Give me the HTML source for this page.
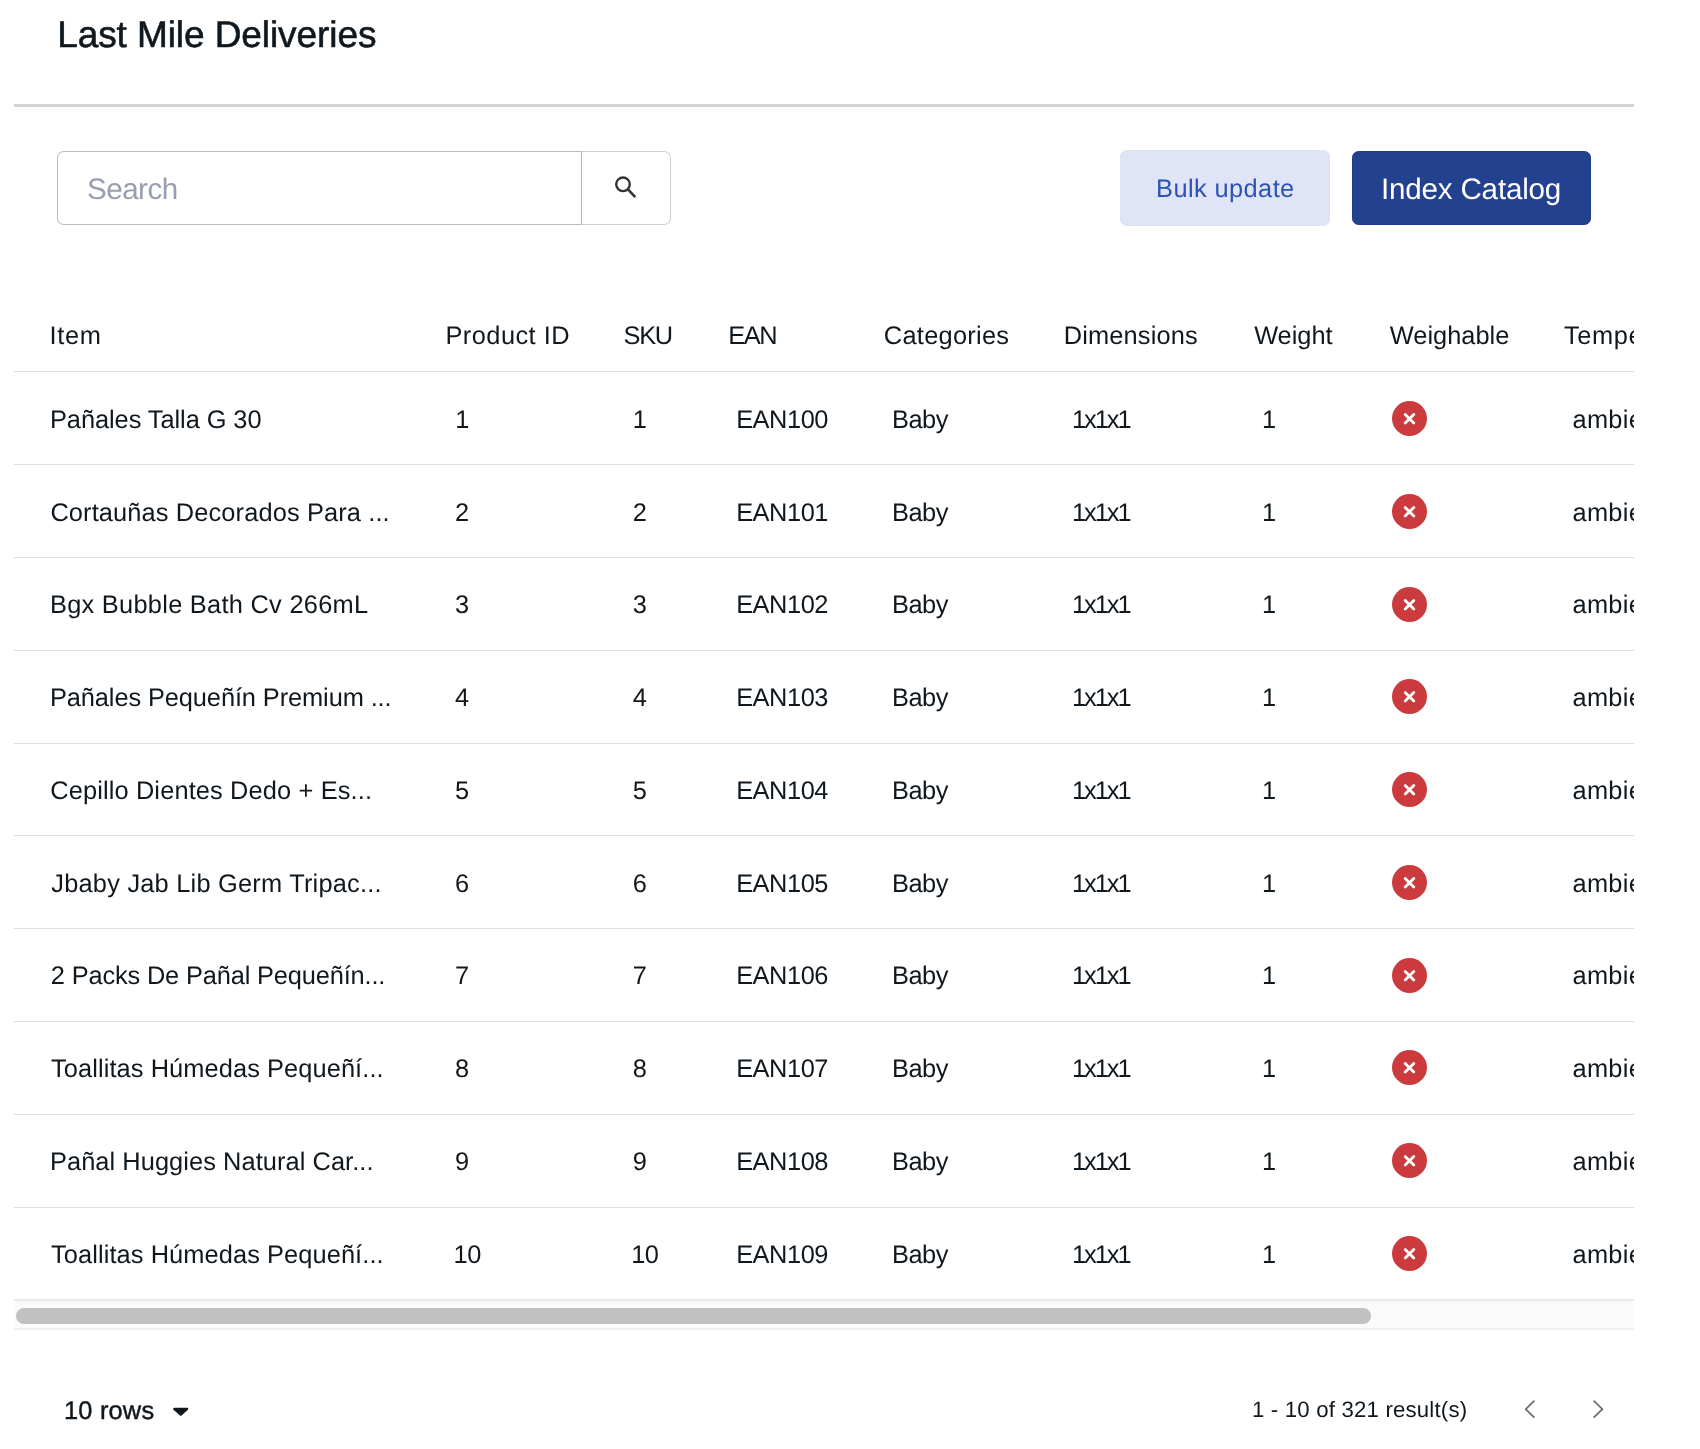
<!DOCTYPE html><html lang="es"><head><meta charset="utf-8"><title>Last Mile Deliveries</title><style>
*{box-sizing:border-box;margin:0;padding:0}
html,body{width:1700px;height:1449px;background:#fff;overflow:hidden}
body{position:relative;font-family:"Liberation Sans",Arial,sans-serif;color:#10181e;text-rendering:geometricPrecision}
.wrap{position:absolute;left:14px;top:0;width:1620px;height:1449px;overflow:hidden;will-change:transform}
.t{position:absolute;white-space:nowrap;line-height:1}
h1.t{font-size:37px;font-weight:400;-webkit-text-stroke:0.6px #10181e}
.hr{position:absolute;left:0;top:104px;width:1620px;height:3px;background:#d3d3d3}
.search{position:absolute;left:43px;top:151px;width:525px;height:74px;border:1px solid #bdbdbd;border-right:none;border-radius:7px 0 0 7px;background:#fff}
.ph{font-size:29.6px;color:#969eaf}
.sbtn{position:absolute;left:567px;top:151px;width:89.5px;height:74px;border:1px solid #cfcfcf;border-left:1px solid #b4b4b4;border-radius:0 7px 7px 0;background:#fff}
.btn{position:absolute;border-radius:6.5px}
.b1{left:1106px;top:150px;width:210px;height:76px;background:#dfe4f6;border:1px solid #dbe2f6}
.b2{left:1338px;top:151px;width:239px;height:74px;background:#244190;border:1px solid #1d3b8a}
.th,.td{font-size:25.4px}
.line{position:absolute;left:0;width:1620px;height:1px;background:#dedede}
.x{position:absolute;width:35px;height:35px}
.track{position:absolute;left:0;top:1299px;width:1620px;height:31px;background:#fafafa;border-top:2px solid #e9e9e9;border-bottom:2px solid #f0f0f0}
.thumb{position:absolute;left:2px;top:1308px;width:1355px;height:16px;border-radius:8px;background:#c1c1c1}
</style></head><body><div class="wrap">
<h1 class="t " id="title" style="left:43.15px;top:16.0px;letter-spacing:-0.079px;">Last Mile Deliveries</h1>
<div class="hr"></div>
<div class="search"></div>
<span class="t ph" id="ph" style="left:72.95px;top:175.0px;letter-spacing:-0.500px;">Search</span>
<div class="sbtn"><svg width="90" height="74" viewBox="0 0 90 74" style="position:absolute;left:-1px;top:-1px"><circle cx="42" cy="33.3" r="6.8" fill="none" stroke="#333" stroke-width="2.4"/><path d="M46.7 38.2 L54.3 46.1" stroke="#333" stroke-width="2.6" stroke-linecap="butt"/></svg></div>
<div class="btn b1"></div><div class="btn b2"></div>
<span class="t " id="bulk" style="left:1142.11px;top:177.0px;letter-spacing:0.400px;font-size:25.4px;color:#2d53b4;">Bulk update</span>
<span class="t " id="idx" style="left:1366.93px;top:174.6px;letter-spacing:-0.186px;font-size:29.6px;color:#fff;">Index Catalog</span>
<span class="t th" id="h0" style="left:35.40px;top:323.8px;letter-spacing:0.695px;">Item</span>
<span class="t th" id="h1" style="left:431.43px;top:323.8px;letter-spacing:0.456px;">Product ID</span>
<span class="t th" id="h2" style="left:609.60px;top:323.8px;letter-spacing:-1.345px;">SKU</span>
<span class="t th" id="h3" style="left:714.31px;top:323.8px;letter-spacing:-1.480px;">EAN</span>
<span class="t th" id="h4" style="left:869.83px;top:323.8px;letter-spacing:0.263px;">Categories</span>
<span class="t th" id="h5" style="left:1049.78px;top:323.8px;letter-spacing:0.140px;">Dimensions</span>
<span class="t th" id="h6" style="left:1240.13px;top:323.8px;letter-spacing:-0.008px;">Weight</span>
<span class="t th" id="h7" style="left:1375.83px;top:323.8px;letter-spacing:-0.006px;">Weighable</span>
<span class="t th" id="h8" style="left:1550.10px;top:323.8px;letter-spacing:0.580px;">Temperature</span>
<div class="line" style="top:371.0px"></div>
<span class="t td" id="r0c0" style="left:35.98px;top:407.8px;letter-spacing:-0.064px;">Pañales Talla G 30</span>
<span class="t td" id="r0c1" style="left:441.30px;top:407.8px;letter-spacing:0.000px;">1</span>
<span class="t td" id="r0c2" style="left:618.80px;top:407.8px;letter-spacing:0.000px;">1</span>
<span class="t td" id="r0c3" style="left:722.13px;top:407.8px;letter-spacing:-0.450px;">EAN100</span>
<span class="t td" id="r0c4" style="left:878.08px;top:407.8px;letter-spacing:-0.534px;">Baby</span>
<span class="t td" id="r0c5" style="left:1057.92px;top:407.8px;letter-spacing:-2.041px;">1x1x1</span>
<span class="t td" id="r0c6" style="left:1248.05px;top:407.8px;letter-spacing:0.000px;">1</span>
<svg class="x" style="left:1377.5px;top:401.0px" viewBox="0 0 35 35"><circle cx="17.5" cy="17.5" r="17.5" fill="#cb3b3d"/><path d="M13.2 13.4 L21.8 22 M21.8 13.4 L13.2 22" stroke="#fff" stroke-width="2.8" stroke-linecap="round"/></svg>
<span class="t td" id="r0c8" style="left:1558.50px;top:407.8px;letter-spacing:0.300px;">ambient</span>
<span class="t td" id="r1c0" style="left:36.40px;top:500.6px;letter-spacing:0.124px;">Cortauñas Decorados Para ...</span>
<span class="t td" id="r1c1" style="left:441.05px;top:500.6px;letter-spacing:0.000px;">2</span>
<span class="t td" id="r1c2" style="left:618.80px;top:500.6px;letter-spacing:0.000px;">2</span>
<span class="t td" id="r1c3" style="left:722.13px;top:500.6px;letter-spacing:-0.450px;">EAN101</span>
<span class="t td" id="r1c4" style="left:878.08px;top:500.6px;letter-spacing:-0.534px;">Baby</span>
<span class="t td" id="r1c5" style="left:1057.92px;top:500.6px;letter-spacing:-2.041px;">1x1x1</span>
<span class="t td" id="r1c6" style="left:1248.05px;top:500.6px;letter-spacing:0.000px;">1</span>
<svg class="x" style="left:1377.5px;top:493.8px" viewBox="0 0 35 35"><circle cx="17.5" cy="17.5" r="17.5" fill="#cb3b3d"/><path d="M13.2 13.4 L21.8 22 M21.8 13.4 L13.2 22" stroke="#fff" stroke-width="2.8" stroke-linecap="round"/></svg>
<span class="t td" id="r1c8" style="left:1558.50px;top:500.6px;letter-spacing:0.300px;">ambient</span>
<span class="t td" id="r2c0" style="left:35.98px;top:593.3px;letter-spacing:0.270px;">Bgx Bubble Bath Cv 266mL</span>
<span class="t td" id="r2c1" style="left:441.05px;top:593.3px;letter-spacing:0.000px;">3</span>
<span class="t td" id="r2c2" style="left:618.80px;top:593.3px;letter-spacing:0.000px;">3</span>
<span class="t td" id="r2c3" style="left:722.13px;top:593.3px;letter-spacing:-0.450px;">EAN102</span>
<span class="t td" id="r2c4" style="left:878.08px;top:593.3px;letter-spacing:-0.534px;">Baby</span>
<span class="t td" id="r2c5" style="left:1057.92px;top:593.3px;letter-spacing:-2.041px;">1x1x1</span>
<span class="t td" id="r2c6" style="left:1248.05px;top:593.3px;letter-spacing:0.000px;">1</span>
<svg class="x" style="left:1377.5px;top:586.5px" viewBox="0 0 35 35"><circle cx="17.5" cy="17.5" r="17.5" fill="#cb3b3d"/><path d="M13.2 13.4 L21.8 22 M21.8 13.4 L13.2 22" stroke="#fff" stroke-width="2.8" stroke-linecap="round"/></svg>
<span class="t td" id="r2c8" style="left:1558.50px;top:593.3px;letter-spacing:0.300px;">ambient</span>
<span class="t td" id="r3c0" style="left:35.98px;top:686.1px;letter-spacing:-0.101px;">Pañales Pequeñín Premium ...</span>
<span class="t td" id="r3c1" style="left:441.05px;top:686.1px;letter-spacing:0.000px;">4</span>
<span class="t td" id="r3c2" style="left:618.80px;top:686.1px;letter-spacing:0.000px;">4</span>
<span class="t td" id="r3c3" style="left:722.13px;top:686.1px;letter-spacing:-0.450px;">EAN103</span>
<span class="t td" id="r3c4" style="left:878.08px;top:686.1px;letter-spacing:-0.534px;">Baby</span>
<span class="t td" id="r3c5" style="left:1057.92px;top:686.1px;letter-spacing:-2.041px;">1x1x1</span>
<span class="t td" id="r3c6" style="left:1248.05px;top:686.1px;letter-spacing:0.000px;">1</span>
<svg class="x" style="left:1377.5px;top:679.3px" viewBox="0 0 35 35"><circle cx="17.5" cy="17.5" r="17.5" fill="#cb3b3d"/><path d="M13.2 13.4 L21.8 22 M21.8 13.4 L13.2 22" stroke="#fff" stroke-width="2.8" stroke-linecap="round"/></svg>
<span class="t td" id="r3c8" style="left:1558.50px;top:686.1px;letter-spacing:0.300px;">ambient</span>
<span class="t td" id="r4c0" style="left:36.19px;top:778.8px;letter-spacing:0.130px;">Cepillo Dientes Dedo + Es...</span>
<span class="t td" id="r4c1" style="left:441.05px;top:778.8px;letter-spacing:0.000px;">5</span>
<span class="t td" id="r4c2" style="left:618.80px;top:778.8px;letter-spacing:0.000px;">5</span>
<span class="t td" id="r4c3" style="left:722.13px;top:778.8px;letter-spacing:-0.450px;">EAN104</span>
<span class="t td" id="r4c4" style="left:878.08px;top:778.8px;letter-spacing:-0.534px;">Baby</span>
<span class="t td" id="r4c5" style="left:1057.92px;top:778.8px;letter-spacing:-2.041px;">1x1x1</span>
<span class="t td" id="r4c6" style="left:1248.05px;top:778.8px;letter-spacing:0.000px;">1</span>
<svg class="x" style="left:1377.5px;top:772.0px" viewBox="0 0 35 35"><circle cx="17.5" cy="17.5" r="17.5" fill="#cb3b3d"/><path d="M13.2 13.4 L21.8 22 M21.8 13.4 L13.2 22" stroke="#fff" stroke-width="2.8" stroke-linecap="round"/></svg>
<span class="t td" id="r4c8" style="left:1558.50px;top:778.8px;letter-spacing:0.300px;">ambient</span>
<span class="t td" id="r5c0" style="left:37.30px;top:871.6px;letter-spacing:0.212px;">Jbaby Jab Lib Germ Tripac...</span>
<span class="t td" id="r5c1" style="left:441.05px;top:871.6px;letter-spacing:0.000px;">6</span>
<span class="t td" id="r5c2" style="left:618.80px;top:871.6px;letter-spacing:0.000px;">6</span>
<span class="t td" id="r5c3" style="left:722.13px;top:871.6px;letter-spacing:-0.450px;">EAN105</span>
<span class="t td" id="r5c4" style="left:878.08px;top:871.6px;letter-spacing:-0.534px;">Baby</span>
<span class="t td" id="r5c5" style="left:1057.92px;top:871.6px;letter-spacing:-2.041px;">1x1x1</span>
<span class="t td" id="r5c6" style="left:1248.05px;top:871.6px;letter-spacing:0.000px;">1</span>
<svg class="x" style="left:1377.5px;top:864.8px" viewBox="0 0 35 35"><circle cx="17.5" cy="17.5" r="17.5" fill="#cb3b3d"/><path d="M13.2 13.4 L21.8 22 M21.8 13.4 L13.2 22" stroke="#fff" stroke-width="2.8" stroke-linecap="round"/></svg>
<span class="t td" id="r5c8" style="left:1558.50px;top:871.6px;letter-spacing:0.300px;">ambient</span>
<span class="t td" id="r6c0" style="left:36.81px;top:964.4px;letter-spacing:-0.154px;">2 Packs De Pañal Pequeñín...</span>
<span class="t td" id="r6c1" style="left:441.05px;top:964.4px;letter-spacing:0.000px;">7</span>
<span class="t td" id="r6c2" style="left:618.80px;top:964.4px;letter-spacing:0.000px;">7</span>
<span class="t td" id="r6c3" style="left:722.13px;top:964.4px;letter-spacing:-0.450px;">EAN106</span>
<span class="t td" id="r6c4" style="left:878.08px;top:964.4px;letter-spacing:-0.534px;">Baby</span>
<span class="t td" id="r6c5" style="left:1057.92px;top:964.4px;letter-spacing:-2.041px;">1x1x1</span>
<span class="t td" id="r6c6" style="left:1248.05px;top:964.4px;letter-spacing:0.000px;">1</span>
<svg class="x" style="left:1377.5px;top:957.6px" viewBox="0 0 35 35"><circle cx="17.5" cy="17.5" r="17.5" fill="#cb3b3d"/><path d="M13.2 13.4 L21.8 22 M21.8 13.4 L13.2 22" stroke="#fff" stroke-width="2.8" stroke-linecap="round"/></svg>
<span class="t td" id="r6c8" style="left:1558.50px;top:964.4px;letter-spacing:0.300px;">ambient</span>
<span class="t td" id="r7c0" style="left:37.03px;top:1057.1px;letter-spacing:0.085px;">Toallitas Húmedas Pequeñí...</span>
<span class="t td" id="r7c1" style="left:441.05px;top:1057.1px;letter-spacing:0.000px;">8</span>
<span class="t td" id="r7c2" style="left:618.80px;top:1057.1px;letter-spacing:0.000px;">8</span>
<span class="t td" id="r7c3" style="left:722.13px;top:1057.1px;letter-spacing:-0.450px;">EAN107</span>
<span class="t td" id="r7c4" style="left:878.08px;top:1057.1px;letter-spacing:-0.534px;">Baby</span>
<span class="t td" id="r7c5" style="left:1057.92px;top:1057.1px;letter-spacing:-2.041px;">1x1x1</span>
<span class="t td" id="r7c6" style="left:1248.05px;top:1057.1px;letter-spacing:0.000px;">1</span>
<svg class="x" style="left:1377.5px;top:1050.3px" viewBox="0 0 35 35"><circle cx="17.5" cy="17.5" r="17.5" fill="#cb3b3d"/><path d="M13.2 13.4 L21.8 22 M21.8 13.4 L13.2 22" stroke="#fff" stroke-width="2.8" stroke-linecap="round"/></svg>
<span class="t td" id="r7c8" style="left:1558.50px;top:1057.1px;letter-spacing:0.300px;">ambient</span>
<span class="t td" id="r8c0" style="left:35.98px;top:1149.9px;letter-spacing:0.064px;">Pañal Huggies Natural Car...</span>
<span class="t td" id="r8c1" style="left:441.05px;top:1149.9px;letter-spacing:0.000px;">9</span>
<span class="t td" id="r8c2" style="left:618.80px;top:1149.9px;letter-spacing:0.000px;">9</span>
<span class="t td" id="r8c3" style="left:722.13px;top:1149.9px;letter-spacing:-0.450px;">EAN108</span>
<span class="t td" id="r8c4" style="left:878.08px;top:1149.9px;letter-spacing:-0.534px;">Baby</span>
<span class="t td" id="r8c5" style="left:1057.92px;top:1149.9px;letter-spacing:-2.041px;">1x1x1</span>
<span class="t td" id="r8c6" style="left:1248.05px;top:1149.9px;letter-spacing:0.000px;">1</span>
<svg class="x" style="left:1377.5px;top:1143.1px" viewBox="0 0 35 35"><circle cx="17.5" cy="17.5" r="17.5" fill="#cb3b3d"/><path d="M13.2 13.4 L21.8 22 M21.8 13.4 L13.2 22" stroke="#fff" stroke-width="2.8" stroke-linecap="round"/></svg>
<span class="t td" id="r8c8" style="left:1558.50px;top:1149.9px;letter-spacing:0.300px;">ambient</span>
<span class="t td" id="r9c0" style="left:37.03px;top:1242.6px;letter-spacing:0.085px;">Toallitas Húmedas Pequeñí...</span>
<span class="t td" id="r9c1" style="left:439.55px;top:1242.6px;letter-spacing:-0.500px;">10</span>
<span class="t td" id="r9c2" style="left:617.20px;top:1242.6px;letter-spacing:-0.500px;">10</span>
<span class="t td" id="r9c3" style="left:722.13px;top:1242.6px;letter-spacing:-0.450px;">EAN109</span>
<span class="t td" id="r9c4" style="left:878.08px;top:1242.6px;letter-spacing:-0.534px;">Baby</span>
<span class="t td" id="r9c5" style="left:1057.92px;top:1242.6px;letter-spacing:-2.041px;">1x1x1</span>
<span class="t td" id="r9c6" style="left:1248.05px;top:1242.6px;letter-spacing:0.000px;">1</span>
<svg class="x" style="left:1377.5px;top:1235.8px" viewBox="0 0 35 35"><circle cx="17.5" cy="17.5" r="17.5" fill="#cb3b3d"/><path d="M13.2 13.4 L21.8 22 M21.8 13.4 L13.2 22" stroke="#fff" stroke-width="2.8" stroke-linecap="round"/></svg>
<span class="t td" id="r9c8" style="left:1558.50px;top:1242.6px;letter-spacing:0.300px;">ambient</span>
<div class="line" style="top:464px"></div>
<div class="line" style="top:557px"></div>
<div class="line" style="top:650px"></div>
<div class="line" style="top:743px"></div>
<div class="line" style="top:835px"></div>
<div class="line" style="top:928px"></div>
<div class="line" style="top:1021px"></div>
<div class="line" style="top:1114px"></div>
<div class="line" style="top:1207px"></div>
<div class="track"></div><div class="thumb"></div>
<span class="t " id="rowsel" style="left:49.97px;top:1398.8px;letter-spacing:0.205px;font-size:25.4px;-webkit-text-stroke:0.45px #10181e;">10 rows</span>
<svg style="position:absolute;left:157px;top:1405px" width="20" height="13" viewBox="0 0 20 13"><path d="M3.2 3.9 L16.2 3.9 L9.7 9.8 Z" fill="#10181e" stroke="#10181e" stroke-width="2.2" stroke-linejoin="round"/></svg>
<span class="t " id="res" style="left:1237.97px;top:1399.4px;letter-spacing:0.191px;font-size:22.2px;">1 - 10 of 321 result(s)</span>
<svg style="position:absolute;left:1506px;top:1396px" width="90" height="28" viewBox="0 0 90 28"><path d="M14.4 4.7 L5.7 13.15 L14.4 21.6" fill="none" stroke="#6c6c6c" stroke-width="1.7"/><path d="M73.6 4.7 L82.4 13.15 L73.6 21.6" fill="none" stroke="#6c6c6c" stroke-width="1.7"/></svg>
</div></body></html>
